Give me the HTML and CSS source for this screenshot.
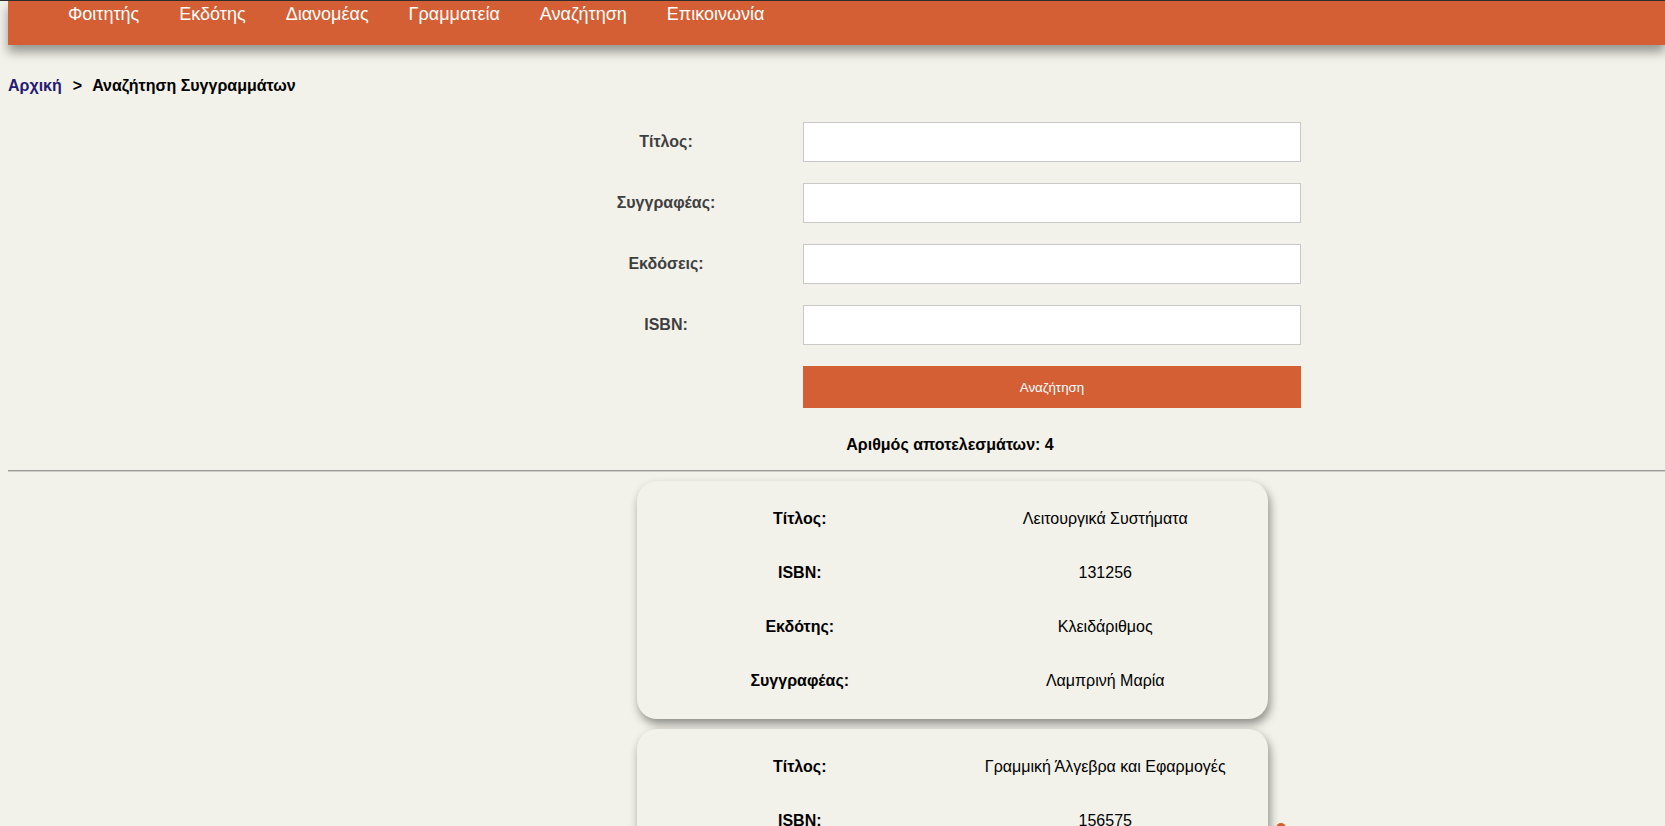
FILE: index.html
```html
<!DOCTYPE html>
<html lang="el">
<head>
<meta charset="utf-8">
<title>Αναζήτηση Συγγραμμάτων</title>
<link rel="stylesheet" href="styles.css">
</head>
<body>
<div class="topline"></div>
<nav class="navbar">
  <ul class="nav-list">
    <li><a href="#">Φοιτητής</a></li>
    <li><a href="#">Εκδότης</a></li>
    <li><a href="#">Διανομέας</a></li>
    <li><a href="#">Γραμματεία</a></li>
    <li><a href="#">Αναζήτηση</a></li>
    <li><a href="#">Επικοινωνία</a></li>
  </ul>
</nav>

<div class="breadcrumb">
  <a href="#" class="crumb-link">Αρχική</a><span class="crumb-sep">&gt;</span><span class="crumb-current">Αναζήτηση Συγγραμμάτων</span>
</div>

<form class="search-form">
  <label class="form-label" for="f-title">Τίτλος:</label>
  <input class="form-input" id="f-title" type="text">
  <label class="form-label" for="f-author">Συγγραφέας:</label>
  <input class="form-input" id="f-author" type="text">
  <label class="form-label" for="f-pub">Εκδόσεις:</label>
  <input class="form-input" id="f-pub" type="text">
  <label class="form-label" for="f-isbn">ISBN:</label>
  <input class="form-input" id="f-isbn" type="text">
  <span class="form-spacer"></span>
  <button class="form-button" type="button">Αναζήτηση</button>
</form>

<div class="result-count">Αριθμός αποτελεσμάτων: 4</div>
<div class="divider"></div>

<div class="results">
  <div class="card">
    <div class="card-label">Τίτλος:</div><div class="card-value">Λειτουργικά Συστήματα</div>
    <div class="card-label">ISBN:</div><div class="card-value">131256</div>
    <div class="card-label">Εκδότης:</div><div class="card-value">Κλειδάριθμος</div>
    <div class="card-label">Συγγραφέας:</div><div class="card-value">Λαμπρινή Μαρία</div>
  </div>
  <div class="card">
    <div class="card-label">Τίτλος:</div><div class="card-value">Γραμμική Άλγεβρα και Εφαρμογές</div>
    <div class="card-label">ISBN:</div><div class="card-value">156575</div>
    <div class="card-label">Εκδότης:</div><div class="card-value">Τζιόλα</div>
    <div class="card-label">Συγγραφέας:</div><div class="card-value">Ξένος Θωμάς</div>
  </div>
</div>

<div class="top-button"></div>
</body>
</html>
```

FILE: styles.css
```css
html, body {
  margin: 0;
  padding: 0;
}

body {
  background: #f2f2ea;
  font-family: "Liberation Sans", Arial, sans-serif;
  color: #000;
  overflow-x: hidden;
}

.topline {
  height: 1px;
  background: #2f2f2f;
}

.navbar {
  margin-left: 8px;
  height: 44px;
  background: #d45f34;
  box-shadow: 0 7px 10px rgba(0, 0, 0, 0.38);
}

.nav-list {
  list-style: none;
  margin: 0;
  padding: 3px 0 0 40px;
  display: flex;
}

.nav-list a {
  display: block;
  padding: 0 20px;
  color: #fff;
  text-decoration: none;
  font-size: 18px;
  line-height: 21px;
}

.breadcrumb {
  margin: 32px 0 0 8px;
  font-size: 16px;
  font-weight: bold;
  line-height: 18px;
}

.crumb-link {
  color: #261a73;
  text-decoration: none;
}

.crumb-sep {
  padding: 0 10px 0 11px;
}

.search-form {
  margin: 27px 0 0 540px;
  display: grid;
  grid-template-columns: 252px 498px;
  grid-auto-rows: 40px;
  column-gap: 11px;
  row-gap: 21px;
  align-items: center;
}

.form-label {
  text-align: center;
  font-size: 16px;
  font-weight: bold;
  color: #3f3f3f;
}

.form-input {
  box-sizing: border-box;
  width: 498px;
  height: 40px;
  margin: 0;
  border: 1px solid #c9c9c9;
  background: #fff;
  outline: none;
}

.form-button {
  height: 42px;
  margin-top: 2px;
  width: 498px;
  border: none;
  background: #d45f34;
  color: #fff;
  font-family: "Liberation Sans", Arial, sans-serif;
  font-size: 13.33px;
  cursor: pointer;
}

.result-count {
  margin: 30px 0 0 540px;
  width: 820px;
  text-align: center;
  font-size: 16px;
  font-weight: bold;
  line-height: 18px;
}

.divider {
  margin: 16px 0 0 8px;
  border-top: 1px solid #9a9a9a;
  border-bottom: 1px solid #cfcfc8;
}

.results {
  margin: 9px 0 0 637px;
  display: flex;
  flex-direction: column;
  gap: 10px;
  padding-bottom: 40px;
}

.card {
  width: 631px;
  box-sizing: border-box;
  padding: 11px 10px;
  border-radius: 20px;
  background: #f2f2ea;
  box-shadow: 2px 5px 10px rgba(0, 0, 0, 0.42);
  display: grid;
  grid-template-columns: 1fr 1fr;
  grid-auto-rows: 54px;
  align-items: center;
  text-align: center;
  font-size: 16px;
}

.card-label {
  font-weight: bold;
}

.top-button {
  position: fixed;
  left: 1276px;
  top: 823px;
  width: 10px;
  height: 10px;
  border-radius: 50%;
  background: #d45f34;
}
```
